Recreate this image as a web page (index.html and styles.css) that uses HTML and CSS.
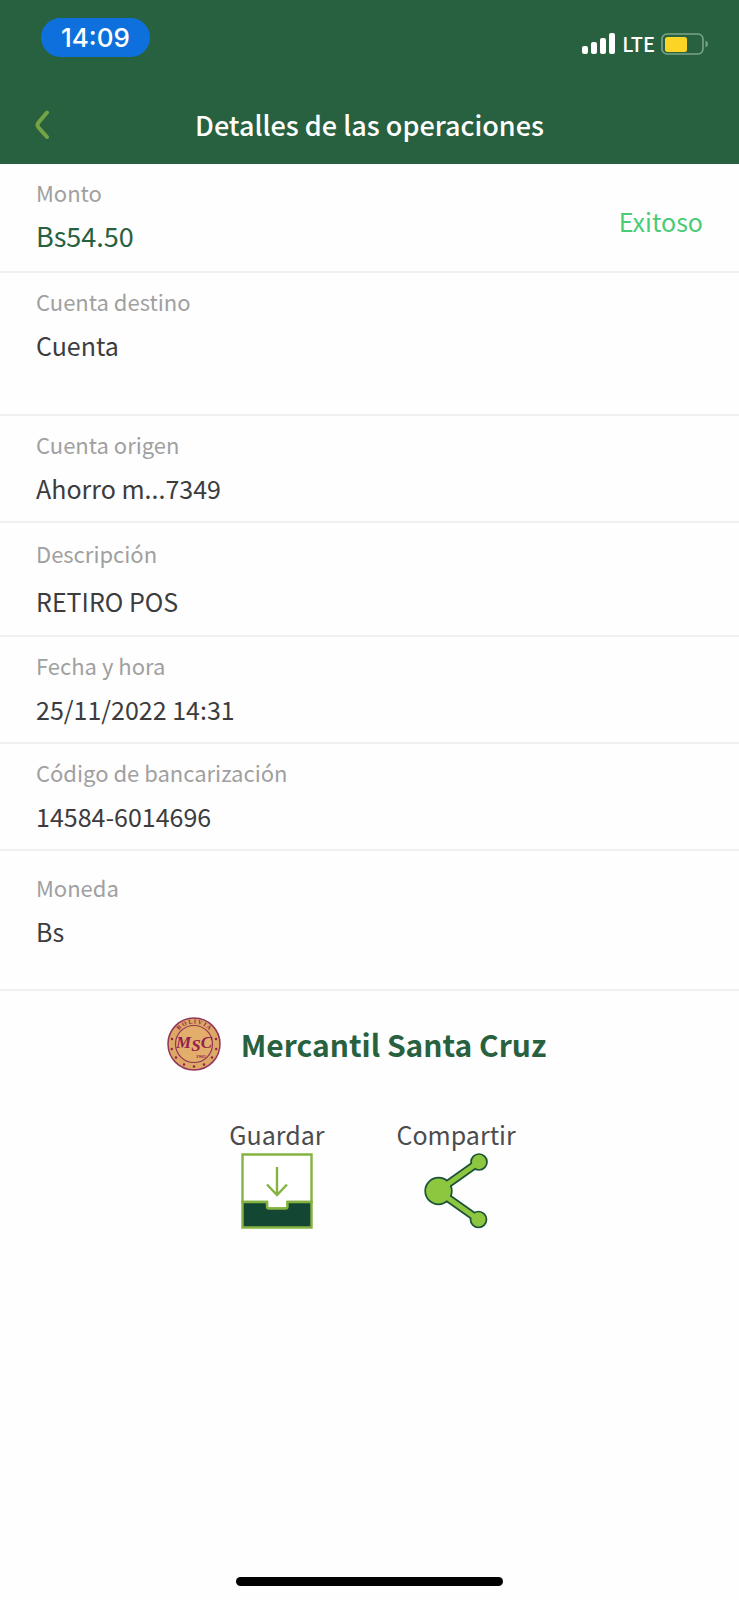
FILE: index.html
```html
<!DOCTYPE html>
<html lang="es">
<head>
<meta charset="utf-8">
<meta name="viewport" content="width=device-width, initial-scale=1">
<title>Detalles de las operaciones</title>
<link rel="stylesheet" href="styles.css">
</head>
<body>
<div class="screen">
  <header class="header">
    <div class="status">
      <span class="clock">14:09</span>
      <div class="indicators">
        <svg class="signal" width="34" height="22" viewBox="0 0 34 22" fill="#fff" aria-hidden="true">
          <rect x="0" y="13" width="6" height="8" rx="2"/><rect x="9" y="9" width="6" height="12" rx="2"/><rect x="18" y="5" width="6" height="16" rx="2"/><rect x="27" y="0" width="6" height="21" rx="2"/>
        </svg>
        <span class="network">LTE</span>
        <svg width="48" height="22" viewBox="0 0 48 22" aria-hidden="true">
          <rect x="1" y="1" width="41" height="20" rx="5" fill="none" stroke="#7ba389" stroke-width="1.6"/>
          <rect x="4" y="4" width="22" height="15" rx="2.5" fill="#fcd426"/>
          <path d="M44.5 7.5Q47 8.500 47 11T44.500 14.500Z" fill="#7ba389"/>
        </svg>
      </div>
    </div>
    <nav class="nav">
      <button class="back" type="button" aria-label="Volver">
        <svg width="16" height="30" viewBox="0 0 16 30" fill="none" stroke="#75a444" stroke-width="4" stroke-linecap="round" stroke-linejoin="round" aria-hidden="true"><path d="M13 2.500 4.500 12.500Q2.500 15 4.500 17.500L13 27"/></svg>
      </button>
      <h1 class="title">Detalles de las operaciones</h1>
    </nav>
  </header>

  <main>
    <dl class="details">
      <div class="row row-amount">
        <div>
          <dt>Monto</dt>
          <dd class="amount">Bs54.50</dd>
        </div>
        <dd class="state">Exitoso</dd>
      </div>
      <div class="row row-target"><dt>Cuenta destino</dt><dd>Cuenta</dd></div>
      <div class="row"><dt>Cuenta origen</dt><dd>Ahorro m...7349</dd></div>
      <div class="row row-description"><dt>Descripción</dt><dd>RETIRO POS</dd></div>
      <div class="row"><dt>Fecha y hora</dt><dd>25/11/2022 14:31</dd></div>
      <div class="row"><dt>Código de bancarización</dt><dd>14584-6014696</dd></div>
      <div class="row row-currency"><dt>Moneda</dt><dd>Bs</dd></div>
    </dl>

    <div class="brand">
      <svg width="54" height="54" viewBox="0 0 54 54" aria-hidden="true">
        <circle cx="27" cy="27" r="26" fill="#dda765" stroke="#92365a" stroke-width="1.500"/>
        <circle cx="27" cy="27" r="18.500" fill="#e3ad6b" stroke="#92365a" stroke-width="1.200"/>
        <defs><path id="seal-arc" d="M6.500 27A20.500 20.500 0 0 1 47.500 27"/></defs>
        <text class="seal-name" text-anchor="middle"><textPath href="#seal-arc" startOffset="50%">B O L I V I A</textPath></text>
        <g fill="#92214f"><circle cx="5" cy="22" r="1.200"/><circle cx="4.800" cy="32" r="1.200"/><circle cx="9" cy="40.500" r="1.200"/><circle cx="17" cy="47.500" r="1.200"/><circle cx="27" cy="49.500" r="1.200"/><circle cx="37" cy="47.500" r="1.200"/><circle cx="45" cy="40.500" r="1.200"/><circle cx="49.200" cy="32" r="1.200"/><circle cx="49" cy="22" r="1.200"/></g>
        <text class="seal-letters" x="27" y="31" text-anchor="middle">M<tspan dy="3">S</tspan><tspan dy="-3">C</tspan></text>
        <text class="seal-year" x="29" y="41">1905</text>
      </svg>
      <span class="brand-name">Mercantil Santa Cruz</span>
    </div>

    <div class="actions">
      <button class="action" type="button">
        <span>Guardar</span>
        <svg width="72" height="76" viewBox="0 0 72 76" fill="none" stroke="#84b341" stroke-width="2.400" aria-hidden="true">
          <path d="M1.500 1.500H70.500V49H46.500V53.500Q46.500 55.500 44.500 55.500H28Q26 55.500 26 53.500V49H1.500Z" fill="#fff"/>
          <path d="M1.500 49H26V53.500Q26 55.500 28 55.500H44.500Q46.500 55.500 46.500 53.500V49H70.500V74.500H1.500Z" fill="#144733"/>
          <path d="M36 14V42M26 31.500 36 42 46 31.500"/>
        </svg>
      </button>
      <button class="action" type="button">
        <span>Compartir</span>
        <svg width="64" height="76" viewBox="0 0 64 76" aria-hidden="true">
          <g stroke="#1b5137" stroke-width="8.500" fill="#1b5137"><path d="M14 38 55 9M14 38 55 67"/></g>
          <g fill="#8dc63f" stroke="#1b5137" stroke-width="1.700"><circle cx="14.500" cy="38" r="13.300"/><circle cx="55" cy="9" r="8"/><circle cx="54.500" cy="66.500" r="8"/></g>
          <path d="M14 38 55 9M14 38 55 67" fill="none" stroke="#8dc63f" stroke-width="5.200"/>
        </svg>
      </button>
    </div>
  </main>
  <div class="home-bar"></div>
</div>
</body>
</html>
```
FILE: styles.css
```css
* { box-sizing: border-box; }

body {
  margin: 0;
  background: #fefefe;
  color: #3c3c3e;
  font-family: "Noto Sans CJK SC", "Noto Sans", sans-serif;
}

button {
  padding: 0;
  border: 0;
  background: none;
  color: inherit;
  font: inherit;
  cursor: pointer;
}

svg { display: block; flex: none; }

.screen {
  display: flex;
  flex-direction: column;
  min-height: 100vh;
}

.header {
  padding-top: 18px;
  background: #286140;
  color: #fff;
}

.status {
  display: flex;
  justify-content: space-between;
  padding: 0 30px 0 41px;
}

.clock {
  padding: 0 20px;
  border-radius: 20px;
  background: #0e70dc;
  font: 500 26px/39px Inter, sans-serif;
}

.indicators {
  display: flex;
  align-items: center;
  gap: 6px;
  padding-top: 13px;
}

.network {
  font-size: 20px;
  font-weight: 500;
  line-height: 24px;
}

.nav {
  display: grid;
  grid-template-columns: 36px 1fr 36px;
  align-items: center;
  padding: 48px 34px 19px;
}

.back { width: 16px; }

.title {
  margin: 0;
  font-size: 27px;
  font-weight: 500;
  line-height: 40px;
  text-align: center;
}

.details { margin: 0; }

.row {
  padding: 12px 36px 15px;
  border-bottom: 2px solid #f0f0f0;
}

dt {
  margin-bottom: 10px;
  color: #a0a0a0;
  font-size: 22px;
  line-height: 32px;
}

dd {
  margin: 0;
  font-size: 25px;
  line-height: 36px;
}

.row-amount {
  display: flex;
  align-items: center;
  justify-content: space-between;
}

.row-amount dt { margin-bottom: 8px; }
.amount { color: #286140; font-size: 27px; line-height: 40px; }
.state { padding-top: 10px; color: #4bcb75; }
.row-target { padding-bottom: 51px; }
.row-description { padding: 14px 36px 16px; }
.row-description dt { margin-bottom: 14px; }
.row-currency { padding: 20px 36px 40px; }

.brand {
  display: flex;
  align-items: center;
  justify-content: center;
  gap: 20px;
  padding: 26px 26px 0 0;
}

.brand-name {
  color: #286140;
  font-size: 30px;
  font-weight: 700;
  line-height: 48px;
}

.seal-name { fill: #92214f; font: 700 6px "Liberation Serif", serif; }
.seal-letters { fill: #92214f; font: italic 700 17px "Liberation Serif", serif; }
.seal-year { fill: #92214f; font: 700 5px "Liberation Serif", serif; }

.actions {
  display: flex;
  justify-content: center;
  gap: 72px;
  padding: 44px 0 0 6px;
}

.action {
  display: flex;
  flex-direction: column;
  align-items: center;
  color: #4c4c4e;
  font-size: 25px;
  line-height: 38px;
}

.home-bar {
  width: 36%;
  height: 9px;
  margin: auto auto 14px;
  border-radius: 5px;
  background: #000;
}
```
